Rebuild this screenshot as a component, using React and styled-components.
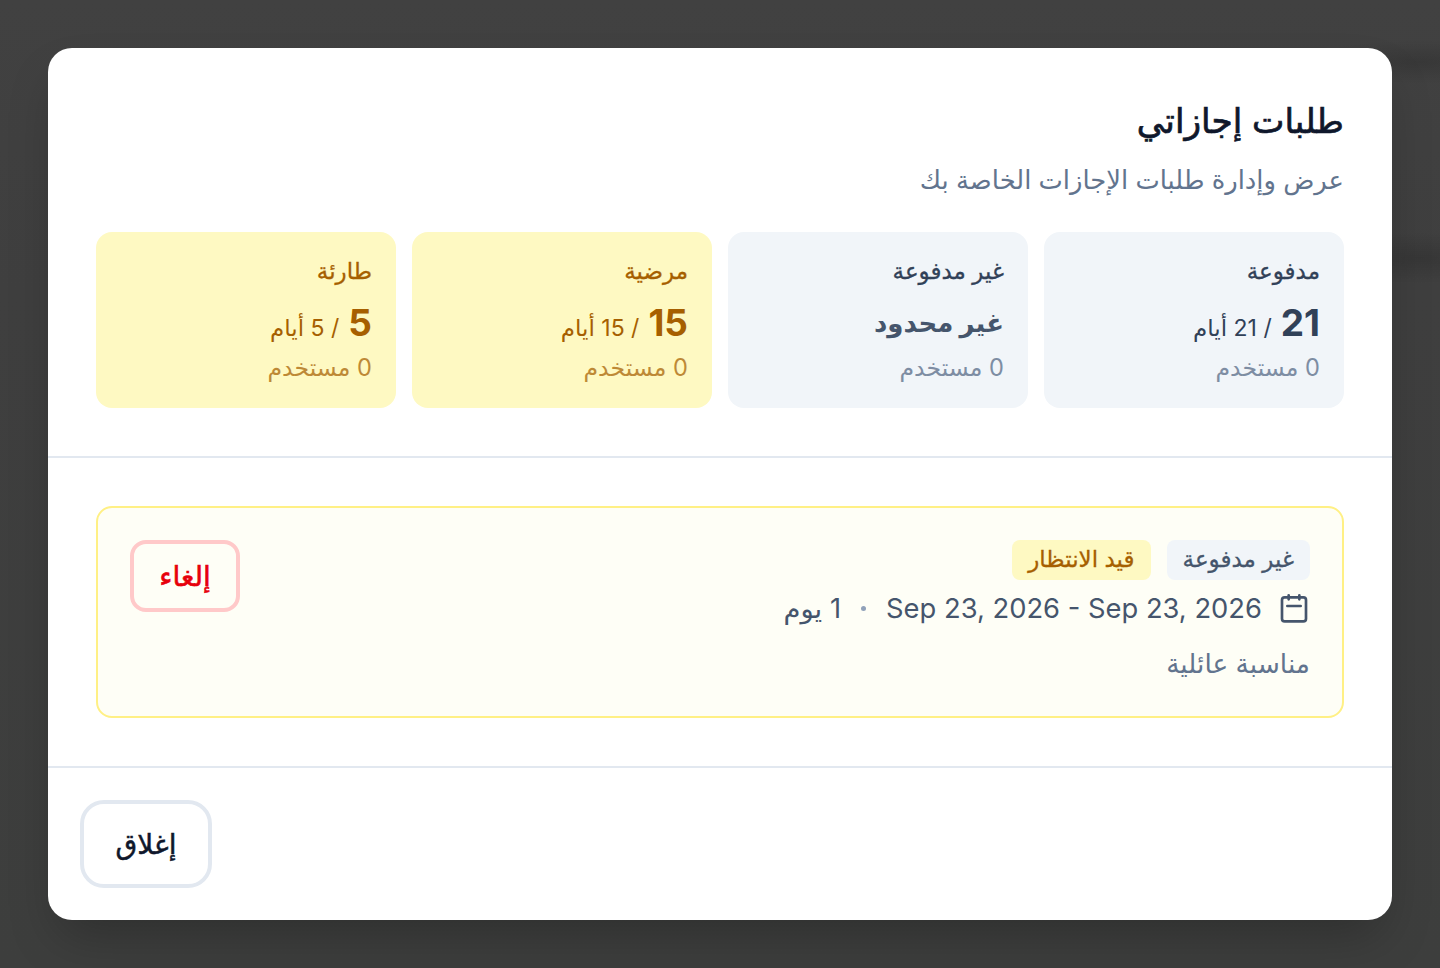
import React from 'react';
import styled, { createGlobalStyle } from 'styled-components';

const GlobalStyle = createGlobalStyle`
  html, body {
    margin: 0;
    padding: 0;
    height: 100%;
    background: #3f403f;
  }
  * {
    box-sizing: border-box;
  }
`;

const Overlay = styled.div`
  width: 1440px;
  height: 968px;
  padding: 48px;
  background:
    radial-gradient(ellipse 120px 22px at 1420px 62px, rgba(0, 0, 0, 0.14), transparent),
    radial-gradient(ellipse 120px 26px at 1420px 258px, rgba(0, 0, 0, 0.14), transparent),
    linear-gradient(180deg, #414141 0%, #3f3f3f 30%, #3d3e3d 100%);
  font-family: Inter, "Noto Sans", "DejaVu Sans", sans-serif;
  overflow: hidden;
`;

const Modal = styled.div`
  direction: rtl;
  height: 872px;
  display: flex;
  flex-direction: column;
  background: #fff;
  border-radius: 24px;
  box-shadow: 0 25px 50px -12px rgba(0, 0, 0, 0.25);
  overflow: hidden;
`;

const Header = styled.header`
  padding: 48px;
  border-bottom: 2px solid #e2e8f0;
`;

const Title = styled.h2`
  margin: 0;
  height: 52px;
  font-size: 34.4px;
  line-height: 50px;
  font-weight: 400;
  -webkit-text-stroke: 0.7px #0f172b;
  color: #0f172b;
`;

const Subtitle = styled.p`
  margin: 12px 0 0;
  height: 40px;
  font-size: 25.8px;
  line-height: 40px;
  color: #62748e;
`;

const Cards = styled.div`
  display: grid;
  grid-template-columns: repeat(4, 1fr);
  gap: 16px;
  margin-top: 32px;
`;

const Card = styled.div`
  height: 176px;
  padding: 24px;
  border-radius: 16px;
  background: ${p => (p.$warm ? '#fef9c2' : '#f1f5f9')};
  color: ${p => (p.$warm ? '#a65f00' : '#314158')};
`;

const CardLabel = styled.div`
  font-size: 23px;
  line-height: 30px;
  font-weight: 400;
  -webkit-text-stroke: 0.3px currentColor;
`;

const CardValue = styled.div`
  display: flex;
  align-items: baseline;
  gap: 9px;
  height: 40px;
  margin-top: 17px;
  line-height: 40px;
`;

const Amount = styled.span`
  font-size: ${p => (p.$text ? '26px' : '37px')};
  font-weight: 700;
  color: ${p => (p.$text ? '#45556c' : 'inherit')};
`;

const Total = styled.span`
  font-size: 23px;
  font-weight: 400;
`;

const Used = styled.div`
  margin-top: 9px;
  font-size: 23.6px;
  line-height: 32px;
  color: ${p => (p.$warm ? '#a65f00' : '#62748e')};
  opacity: ${p => (p.$warm ? 0.72 : 0.8)};
`;

const Requests = styled.section`
  padding: 48px;
  border-bottom: 2px solid #e2e8f0;
`;

const Request = styled.article`
  display: flex;
  justify-content: space-between;
  align-items: flex-start;
  height: 212px;
  padding: 32px;
  background: #fefef6;
  border: 2px solid #fff085;
  border-radius: 16px;
`;

const RequestBody = styled.div`
  display: flex;
  flex-direction: column;
`;

const Badges = styled.div`
  display: flex;
  gap: 16px;
`;

const Badge = styled.span`
  height: 40px;
  padding: 0 16px;
  border-radius: 8px;
  font-size: 23px;
  line-height: 38px;
  -webkit-text-stroke: 0.3px currentColor;
  background: ${p => (p.$warm ? '#fef9c2' : '#f1f5f9')};
  color: ${p => (p.$warm ? '#a65f00' : '#45556c')};
`;

const DateRow = styled.div`
  display: flex;
  align-items: center;
  height: 40px;
  margin-top: 8px;
  color: #45556c;
  font-size: 27.35px;
`;

const DateText = styled.span`
  direction: ltr;
  margin-right: 16px;
`;

const Dot = styled.span`
  width: 5px;
  height: 5px;
  margin: 0 20px;
  border-radius: 50%;
  background: #90a1b9;
`;

const Reason = styled.div`
  margin-top: 15px;
  font-size: 26.4px;
  line-height: 40px;
  color: #62748e;
`;

const Button = styled.button`
  font-family: inherit;
  cursor: pointer;
`;

const CancelButton = styled(Button)`
  width: 110px;
  height: 72px;
  border: 4px solid #ffc9c9;
  border-radius: 16px;
  background: transparent;
  font-size: 28px;
  font-weight: 400;
  -webkit-text-stroke: 0.6px #e7000b;
  color: #e7000b;
`;

const Footer = styled.footer`
  display: flex;
  justify-content: flex-end;
  padding: 32px;
`;

const CloseButton = styled(Button)`
  width: 132px;
  height: 88px;
  border: 4px solid #e2e8f0;
  border-radius: 24px;
  background: #fff;
  font-size: 28px;
  font-weight: 400;
  -webkit-text-stroke: 0.5px #0f172b;
  color: #0f172b;
`;

const balances = [
  { label: 'مدفوعة', amount: '21', total: '/ 21 أيام' },
  { label: 'غير مدفوعة', text: 'غير محدود' },
  { label: 'مرضية', amount: '15', total: '/ 15 أيام', warm: true },
  { label: 'طارئة', amount: '5', total: '/ 5 أيام', warm: true },
];

const CalendarIcon = () => (
  <svg width="32" height="32" viewBox="0 0 24 24" fill="none" stroke="#45556c" strokeWidth="2" strokeLinecap="round" strokeLinejoin="round">
    <path d="M8 2.5v3M16 2.5v3" />
    <rect x="3" y="4" width="18" height="18" rx="2" />
    <path d="M7 10.5h10" />
  </svg>
);

export default function App() {
  return (
    <Overlay>
      <GlobalStyle />
      <Modal>
        <Header>
          <Title>طلبات إجازاتي</Title>
          <Subtitle>عرض وإدارة طلبات الإجازات الخاصة بك</Subtitle>
          <Cards>
            {balances.map(b => (
              <Card key={b.label} $warm={b.warm}>
                <CardLabel>{b.label}</CardLabel>
                <CardValue>
                  <Amount $text={!!b.text}>{b.text || b.amount}</Amount>
                  {b.total && <Total>{b.total}</Total>}
                </CardValue>
                <Used $warm={b.warm}>0 مستخدم</Used>
              </Card>
            ))}
          </Cards>
        </Header>
        <Requests>
          <Request>
            <RequestBody>
              <Badges>
                <Badge>غير مدفوعة</Badge>
                <Badge $warm>قيد الانتظار</Badge>
              </Badges>
              <DateRow>
                <CalendarIcon />
                <DateText>Sep 23, 2026 - Sep 23, 2026</DateText>
                <Dot />
                <span>1 يوم</span>
              </DateRow>
              <Reason>مناسبة عائلية</Reason>
            </RequestBody>
            <CancelButton>إلغاء</CancelButton>
          </Request>
        </Requests>
        <Footer>
          <CloseButton>إغلاق</CloseButton>
        </Footer>
      </Modal>
    </Overlay>
  );
}
